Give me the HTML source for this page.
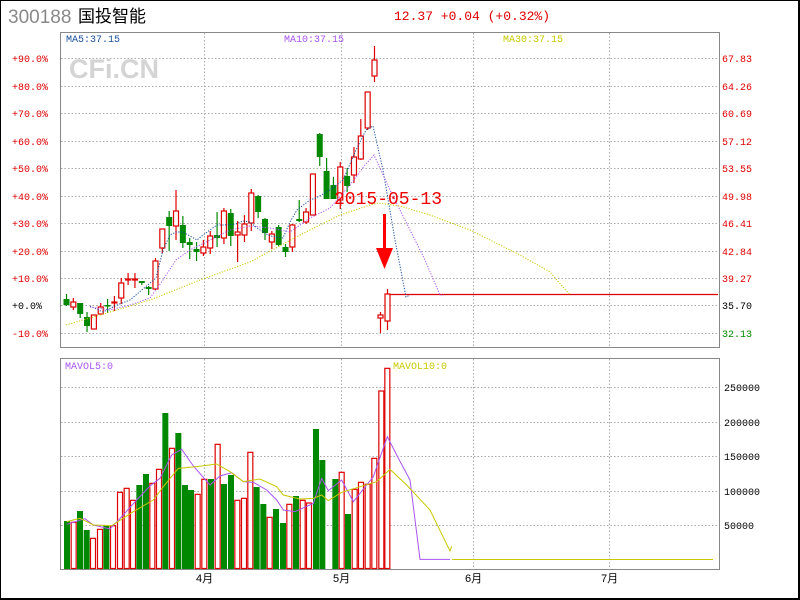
<!DOCTYPE html>
<html><head><meta charset="utf-8"><style>
html,body{margin:0;padding:0;background:#fff}
svg{display:block}
text{font-family:"Liberation Mono","Noto Sans CJK SC",monospace}
</style></head><body>
<svg id="s" width="800" height="600" viewBox="0 0 800 600" xmlns="http://www.w3.org/2000/svg">
<rect x="0" y="0" width="800" height="600" fill="#fff"/>
<rect x="0.5" y="0.5" width="798" height="598" fill="none" stroke="#000" stroke-width="1"/>
<line x1="799" y1="0" x2="799" y2="600" stroke="#000" stroke-width="2"/>
<line x1="0" y1="599" x2="800" y2="599" stroke="#000" stroke-width="2"/>
<text x="8" y="23" font-size="19" fill="#888" style="font-family:'Liberation Sans',sans-serif">300188</text>
<text x="78" y="22" font-size="17" fill="#000" style="font-family:'Liberation Sans','Noto Sans CJK SC',sans-serif">国投智能</text>
<text x="394" y="20" font-size="13" fill="#d00">12.37 +0.04 (+0.32%)</text>
<g id="grid" stroke="#aaa" stroke-dasharray="1.5,2" stroke-width="1"></g>
<rect x="60.5" y="32.5" width="659" height="315" fill="none" stroke="#888"/>
<rect x="60.5" y="358.5" width="659" height="211" fill="none" stroke="#888"/>
<text x="69" y="78" font-size="27" font-weight="bold" fill="#d4d4d4" style="font-family:'Liberation Sans',sans-serif">CFi.CN</text>
<text x="66" y="42" font-size="10" fill="#1a4f9a">MA5:37.15</text>
<text x="284" y="42" font-size="10" fill="#a855f0">MA10:37.15</text>
<text x="503" y="42" font-size="10" fill="#c8c800">MA30:37.15</text>
<text x="65" y="369" font-size="10" fill="#a855f0">MAVOL5:0</text>
<text x="393" y="369" font-size="10" fill="#c8c800">MAVOL10:0</text>
<g id="lab" font-size="10"></g>
<g id="ch"></g>
<text x="334" y="204" font-size="18" fill="#e00">2015-05-13</text>
<rect x="383" y="214" width="3" height="34" fill="#f00"/>
<polygon points="376,248 393,248 384.5,269" fill="#f00"/>
<text x="196" y="582" font-size="11" fill="#000" style="font-family:'Liberation Sans','Noto Sans CJK SC',sans-serif">4月</text>
<text x="333" y="582" font-size="11" fill="#000" style="font-family:'Liberation Sans','Noto Sans CJK SC',sans-serif">5月</text>
<text x="465" y="582" font-size="11" fill="#000" style="font-family:'Liberation Sans','Noto Sans CJK SC',sans-serif">6月</text>
<text x="601" y="582" font-size="11" fill="#000" style="font-family:'Liberation Sans','Noto Sans CJK SC',sans-serif">7月</text>
</svg>
<script>
var NS="http://www.w3.org/2000/svg";
function el(p,t,a,txt){var e=document.createElementNS(NS,t);for(var k in a)e.setAttribute(k,a[k]);if(txt)e.textContent=txt;document.getElementById(p).appendChild(e);return e;}
var hy=[58,86,113,141,168,196,223,251,278,305,333];
hy.forEach(function(y){el("grid","line",{x1:61,x2:719,y1:y+.5,y2:y+.5});});
[387,422,456,491,525].forEach(function(y){el("grid","line",{x1:61,x2:719,y1:y+.5,y2:y+.5});});
[204,341,473,609].forEach(function(x){el("grid","line",{x1:x+.5,x2:x+.5,y1:33,y2:347});el("grid","line",{x1:x+.5,x2:x+.5,y1:359,y2:569});});
var pl=["+90.0%","+80.0%","+70.0%","+60.0%","+50.0%","+40.0%","+30.0%","+20.0%","+10.0%","+0.0%","-10.0%"];
var pr=["67.83","64.26","60.69","57.12","53.55","49.98","46.41","42.84","39.27","35.70","32.13"];
hy.forEach(function(y,i){el("lab","text",{x:12,y:y+4,fill:i==9?"#000":"#d00"},pl[i]);el("lab","text",{x:722,y:y+4,fill:i==9?"#000":(i==10?"#080":"#d00")},pr[i]);});
[["250000",387],["200000",422],["150000",456],["100000",491],["50000",525]].forEach(function(a){el("lab","text",{x:724,y:a[1]+4,fill:"#000"},a[0]);});
var C=[[299,305,294,306,'g'],[302,307,298,310,'r'],[303,314,303,318,'g'],[317,326,312,332,'g'],[315,329,315,329,'r'],[307,314,303,314,'r'],[305,306,299,313,'g'],[302,303,296,311,'r'],[283,298,278,304,'r'],[279,280,273,285,'r'],[279,280,273,288,'r'],[281,283,281,285,'g'],[287,289,286,295,'g'],[261,289,258,290,'r'],[229,248,229,253,'r'],[217,226,211,251,'g'],[211,226,190,240,'r'],[225,243,216,248,'g'],[242,245,238,259,'g'],[249,252,242,261,'g'],[247,253,240,256,'r'],[236,248,231,254,'r'],[235,238,212,247,'g'],[211,238,208,244,'r'],[213,236,209,246,'g'],[232,235,221,262,'r'],[224,235,215,242,'r'],[193,223,189,231,'r'],[196,212,195,218,'g'],[219,233,218,240,'g'],[234,242,231,249,'r'],[227,245,225,246,'g'],[247,252,244,257,'g'],[225,247,224,252,'r'],[219,221,200,222,'g'],[212,222,208,224,'r'],[174,215,174,215,'r'],[134,157,133,166,'g'],[171,199,158,199,'g'],[185,199,177,199,'g'],[167,200,162,209,'r'],[176,186,168,192,'g'],[157,175,147,183,'r'],[136,159,119,160,'r'],[92,128,92,130,'r'],[60,76,46,82,'r']];
C.forEach(function(c,i){var x=64+i*(308/45);var col=c[4]=='r'?'#d00':'#080';
el("ch","line",{x1:x+2.5,x2:x+2.5,y1:c[2],y2:c[3],stroke:col,"stroke-width":1.2});
if(c[4]=='r')el("ch","rect",{x:x,y:c[0],width:5,height:Math.max(1,c[1]-c[0]),fill:"#fff",stroke:col,"stroke-width":1.2});
else el("ch","rect",{x:x-0.5,y:c[0],width:6,height:Math.max(1.5,c[1]-c[0]),fill:col});});
el("ch","line",{x1:380.5,x2:380.5,y1:312,y2:333,stroke:"#d00","stroke-width":1.2});
el("ch","rect",{x:378,y:315,width:5,height:3,fill:"#fff",stroke:"#d00","stroke-width":1.2});
el("ch","line",{x1:387.5,x2:387.5,y1:289,y2:330,stroke:"#d00","stroke-width":1.2});
el("ch","rect",{x:385,y:294,width:5,height:27,fill:"#fff",stroke:"#d00","stroke-width":1.2});
el("ch","line",{x1:390,x2:718,y1:294.5,y2:294.5,stroke:"#d00","stroke-width":1.2});
function poly(pts,col,dash){el("ch","polyline",{points:pts.map(function(p){return p.join(",")}).join(" "),fill:"none",stroke:col,"stroke-width":1,"stroke-dasharray":dash||""});}
poly([[90,306],[103,312],[117,305],[130,300],[143,289],[156,278],[163,250],[170,235],[176,232],[183,232],[190,236],[197,240],[203,235],[210,230],[217,225],[224,225],[236,224],[243,221],[250,222],[257,228],[270,236],[283,238],[290,222],[297,210],[310,200],[316,198],[330,190],[343,180],[356,150],[366,130],[373,126],[383,170],[395,240],[406,297],[410,295]],"#1a4f9a","1.2,1.5");
poly([[90,307],[110,310],[130,305],[150,298],[163,280],[176,260],[190,250],[210,240],[230,230],[250,226],[270,228],[290,232],[310,218],[330,208],[350,185],[365,165],[374,155],[390,190],[410,230],[425,260],[440,295],[444,295]],"#a855f0","1.2,1.5");
poly([[66,325],[100,315],[150,300],[200,280],[250,262],[300,235],[340,215],[370,205],[378,203],[400,206],[430,215],[470,230],[520,255],[550,272],[570,295]],"#c8c800","1.2,1.5");
var V=[[483,'g'],[487,'r'],[453,'g'],[510,'g'],[535,'r'],[508,'r'],[497,'g'],[497,'r'],[397,'r'],[385,'r'],[421,'r'],[375,'g'],[342,'g'],[370,'r'],[328,'r'],[159,'g'],[265,'r'],[219,'g'],[375,'g'],[390,'g'],[403,'r'],[358,'r'],[357,'g'],[253,'r'],[372,'g'],[345,'g'],[421,'r'],[415,'r'],[277,'r'],[381,'g'],[432,'g'],[472,'r'],[447,'g'],[489,'g'],[433,'r'],[408,'g'],[421,'r'],[429,'r'],[207,'g'],[300,'g'],[null],[357,'g'],[337,'r'],[462,'g'],[388,'r'],[367,'r'],[373,'r'],[295,'r'],[93,'r'],[25,'r']];
var VX=[42,62,81,101,120,141,160,180,201,221,240,259,279,298,318,337,357,376,396,414,434,454,474,494,513,534,553,573,592,611,631,650,669,690,709,729,749,768,789,808,828,847,866,885,905,924,944,964,985,1003];
V.forEach(function(v,i){if(!v[0])return;var x=50+VX[i]/3,y=360+v[0]/3;
if(v[1]=='g')el("ch","rect",{x:x,y:y,width:6,height:569-y,fill:"#080"});
else el("ch","rect",{x:x+0.5,y:y,width:5,height:569-y-0.5,fill:"#fff",stroke:"#d00","stroke-width":1.2});});
function vp(a){return a.map(function(p){return [50+p[0]/3,360+p[1]/3];});}
poly(vp([[50,493],[105,476],[130,495],[180,507],[215,470],[260,420],[300,378],[330,355],[365,285],[395,268],[430,318],[480,375],[510,348],[545,338],[580,365],[610,367],[650,390],[680,420],[700,450],[735,455],[790,430],[815,355],[835,392],[875,360],[910,425],[970,350],[1012,230],[1040,285],[1080,360],[1110,598],[1200,598]]),"#a855f0");
poly(vp([[50,485],[90,475],[130,495],[185,497],[250,455],[310,420],[340,380],[385,325],[440,320],[500,312],[540,335],[580,365],[630,357],[680,380],[700,405],[750,417],[790,415],[815,405],[835,422],[875,397],[980,365],[1020,328],[1070,375],[1140,450],[1200,573],[1205,559]]),"#c8c800");
el("ch","line",{x1:452,x2:713,y1:559.5,y2:559.5,stroke:"#c8c800","stroke-width":1});
</script>
</body></html>
